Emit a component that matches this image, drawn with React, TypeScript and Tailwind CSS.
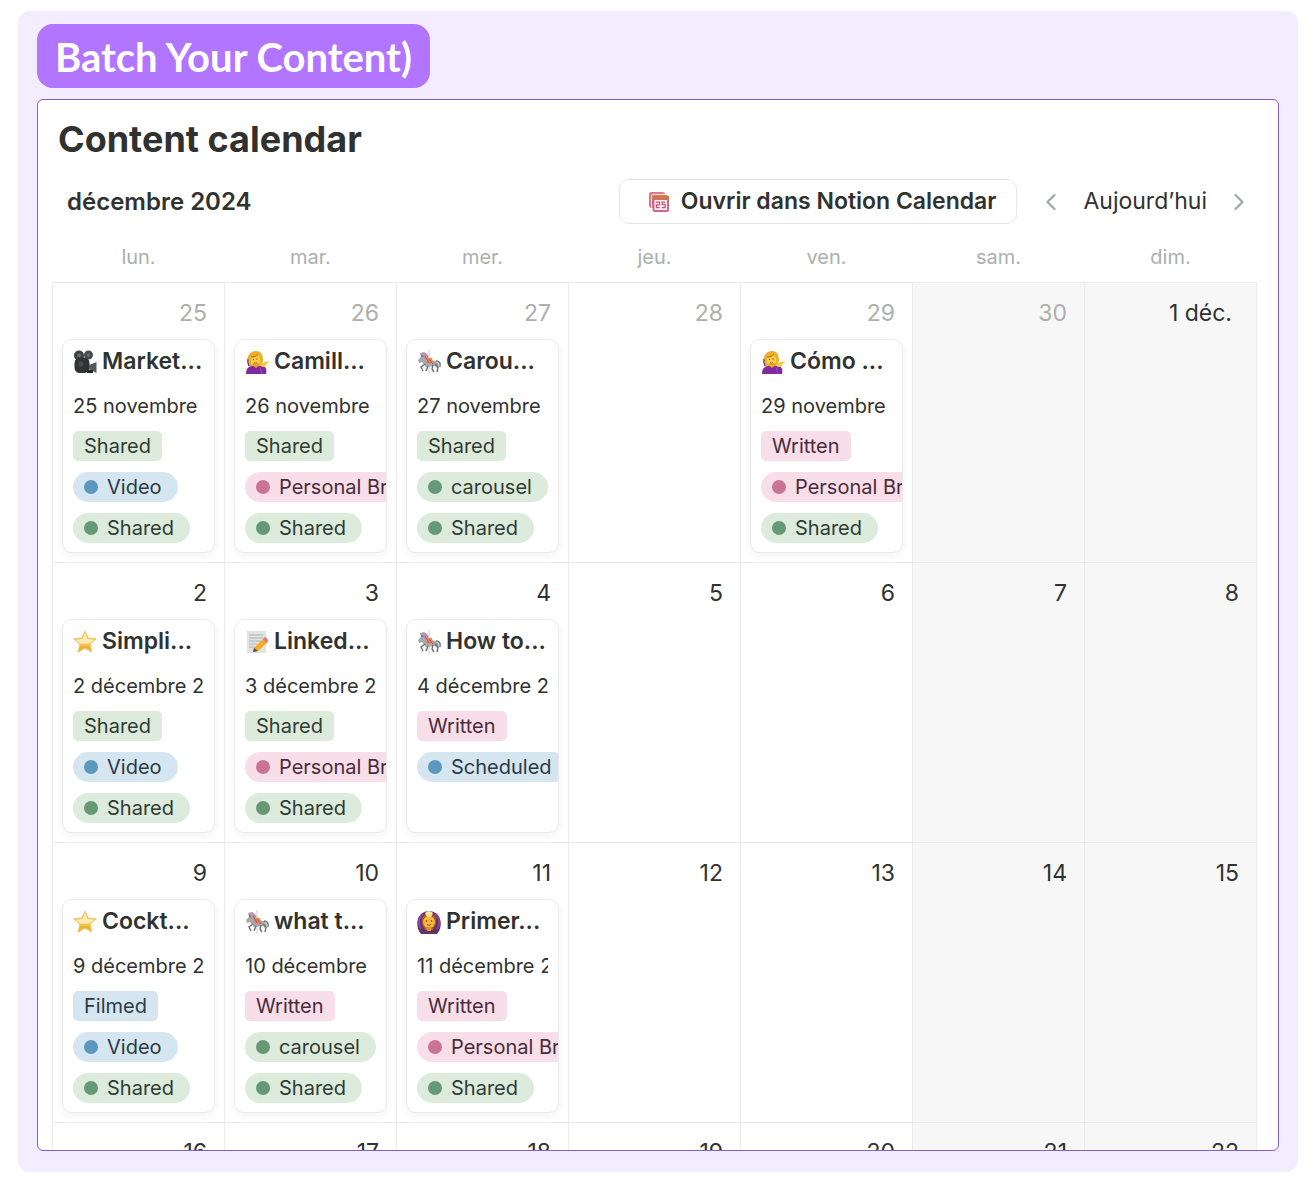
import React from 'react';
import { ChevronLeft, ChevronRight } from 'lucide-react';
import clsx from 'clsx';

type Color = 'green' | 'blue' | 'pink';
type IconName = 'camera' | 'woman' | 'horse' | 'star' | 'memo' | 'ok';

interface Post {
  icon: IconName;
  title: string;
  date: string;
  stage: { label: string; color: Color };
  pills: { label: string; color: Color }[];
}

interface Day {
  label: string;
  muted?: boolean;
  post?: Post;
}

const TAG_COLORS: Record<Color, string> = {
  green: 'bg-[#ddebdd] text-[#2f3b33]',
  blue: 'bg-[#d5e6f1] text-[#2b3a44]',
  pink: 'bg-[#f7dee9] text-[#4a2b39]',
};

const DOT_COLORS: Record<Color, string> = {
  green: 'bg-[#669878]',
  blue: 'bg-[#5c97be]',
  pink: 'bg-[#cb7492]',
};

const SHARED = { label: 'Shared', color: 'green' } as const;
const WRITTEN = { label: 'Written', color: 'pink' } as const;
const FILMED = { label: 'Filmed', color: 'blue' } as const;
const VIDEO = { label: 'Video', color: 'blue' } as const;
const CAROUSEL = { label: 'carousel', color: 'green' } as const;
const BRAND = { label: 'Personal Brand', color: 'pink' } as const;
const SCHEDULED = { label: 'Scheduled', color: 'blue' } as const;

const WEEKDAYS = ['lun.', 'mar.', 'mer.', 'jeu.', 'ven.', 'sam.', 'dim.'];

const WEEKS: Day[][] = [
  [
    { label: '25', muted: true, post: { icon: 'camera', title: 'Market...', date: '25 novembre', stage: SHARED, pills: [VIDEO, SHARED] } },
    { label: '26', muted: true, post: { icon: 'woman', title: 'Camill...', date: '26 novembre', stage: SHARED, pills: [BRAND, SHARED] } },
    { label: '27', muted: true, post: { icon: 'horse', title: 'Carou...', date: '27 novembre', stage: SHARED, pills: [CAROUSEL, SHARED] } },
    { label: '28', muted: true },
    { label: '29', muted: true, post: { icon: 'woman', title: 'Cómo ...', date: '29 novembre', stage: WRITTEN, pills: [BRAND, SHARED] } },
    { label: '30', muted: true },
    { label: '1 déc.' },
  ],
  [
    { label: '2', post: { icon: 'star', title: 'Simpli...', date: '2 décembre 2024', stage: SHARED, pills: [VIDEO, SHARED] } },
    { label: '3', post: { icon: 'memo', title: 'Linked...', date: '3 décembre 2024', stage: SHARED, pills: [BRAND, SHARED] } },
    { label: '4', post: { icon: 'horse', title: 'How to...', date: '4 décembre 2024', stage: WRITTEN, pills: [SCHEDULED] } },
    { label: '5' },
    { label: '6' },
    { label: '7' },
    { label: '8' },
  ],
  [
    { label: '9', post: { icon: 'star', title: 'Cockt...', date: '9 décembre 2024', stage: FILMED, pills: [VIDEO, SHARED] } },
    { label: '10', post: { icon: 'horse', title: 'what t...', date: '10 décembre', stage: WRITTEN, pills: [CAROUSEL, SHARED] } },
    { label: '11', post: { icon: 'ok', title: 'Primer...', date: '11 décembre 2024', stage: WRITTEN, pills: [BRAND, SHARED] } },
    { label: '12' },
    { label: '13' },
    { label: '14' },
    { label: '15' },
  ],
];

const LAST_WEEK = ['16', '17', '18', '19', '20', '21', '22'];

const PostIcon = ({ name }: { name: IconName }) => (
  <svg viewBox="0 0 24 24" className="size-6 shrink-0" aria-hidden="true">
    {name === 'camera' && (
      <>
        <circle cx="6" cy="5.5" r="5" fill="#3d4040" />
        <circle cx="15.5" cy="5" r="4.5" fill="#474a4a" />
        <circle cx="6" cy="5.5" r="2" fill="#6a6d6d" />
        <circle cx="15.5" cy="5" r="1.7" fill="#6a6d6d" />
        <rect x="1.500" y="7.500" width="15" height="15.500" rx="5.500" fill="#303333" />
        <path d="M16 15l7.500-3v11L16 19z" fill="#55585a" />
        <circle cx="8" cy="14" r="2.500" fill="#484c4c" />
        <path d="M14 20h6v3h-6z" fill="#252828" />
      </>
    )}
    {name === 'woman' && (
      <>
        <path d="M3 15C1 6 5 1 11 1c5 0 7 4 7 10l-3 6H4z" fill="#edae2d" />
        <path d="M1 24c0-6 3-8 8-8h8c4 0 5 4 4 8z" fill="#7f2aa0" />
        <path d="M6 8c4 0 6-1 7-3 3 3 3 7 1 9-2 3-7 2-8-1z" fill="#ffcf45" />
        <path d="M7 15l4 3 4-3-1-2H8z" fill="#e5a233" />
        <path d="M15 14c2 0 4-3 8.500-2.500 1 .5 0 1.500-1.500 2l-2 3c-2 1.500-5 0-5-2.500z" fill="#ffc83c" />
        <path d="M3 9c-1 3 0 5 1 7" stroke="#5d3b88" strokeWidth="1.200" fill="none" />
        <circle cx="8.500" cy="9.500" r="0.700" fill="#8a5420" />
        <circle cx="12" cy="9" r="0.700" fill="#8a5420" />
        <path d="M6 7q5 0 7-3M9 12.500q2 1 3 0" stroke="#b9742a" fill="none" />
        <path d="M15 17l2 7" stroke="#9b45b8" strokeWidth="1.200" />
      </>
    )}
    {name === 'horse' && (
      <>
        <path d="M12 0v24" stroke="#c9cccf" strokeWidth="1" />
        <path d="M3 3l4-1 4 3 1 5 7 1 3 3-1 5-3-3-9 1-4-5-3 1-1-3 3-3z" fill="#a5a7ab" />
        <path d="M7 2l3 3 2 4-2 1-3-4z" fill="#d78aa4" />
        <path d="M10 8h5l1 4-4 2-3-3z" fill="#e7953b" />
        <path d="M12 9l4 5M8 6l4 7" stroke="#c54f88" strokeWidth="1.200" />
        <path d="M8 14l-4 3 2 4M11 16l-2 5M18 14l3 3-1 5M16 15l-1 4 2 3" stroke="#6d7075" strokeWidth="1.400" fill="none" />
        <path d="M19 11q5 0 4 6" stroke="#717479" strokeWidth="1.400" fill="none" />
        <circle cx="5" cy="6" r="0.800" fill="#34373a" />
      </>
    )}
    {name === 'star' && (
      <>
        <path
          d="M12 1l3.200 7 8 .8-6 5.500 1.800 8-7-4-7 4 1.800-8-6-5.500 8-.8z"
          fill="#f5c54a"
          stroke="#eec060"
          strokeWidth="0.800"
          strokeLinejoin="round"
        />
        <path d="M12 2.500l2.600 6.500 6.900.8-5 4H7.500l-5-4 6.900-.8z" fill="#fbeab8" />
        <path d="M6 21l1.500-5h9L18 21l-6-3.500z" fill="#e8b33a" />
      </>
    )}
    {name === 'memo' && (
      <>
        <path d="M2 1h19v22H2z" fill="#e1e4e2" />
        <path d="M4 5h14M4 8h14M4 11h12M4 14h8M4 17h6" stroke="#a7acaa" strokeWidth="0.900" />
        <path d="M9 18L19 8l4 4-10 9-5 1z" fill="#f4ac27" />
        <path d="M18 9l2-2q3 1 3 4l-2 2z" fill="#df7a78" />
        <path d="M9 18l4 3-5 1z" fill="#544c3f" />
      </>
    )}
    {name === 'ok' && (
      <>
        <path d="M4 24C-1 18-1 9 4 4c5-4 11-4 16 0 5 5 5 14 0 20z" fill="#5f3268" />
        <path d="M4 19C0 13 2 8 6 4M20 19c4-6 2-11-2-15" stroke="#8a43a5" strokeWidth="2" fill="none" />
        <path d="M5 14C4 7 7 3 12 3s8 4 7 11l-3 6H8z" fill="#a85d2c" />
        <circle cx="12" cy="12" r="6" fill="#f5b838" />
        <path d="M9 17h6l-1 4h-4z" fill="#e0922b" />
        <path d="M8 3q4-4 8 0l-2 4h-4z" fill="#ffe09a" />
        <circle cx="9.500" cy="11" r="0.800" fill="#62401d" />
        <circle cx="14.500" cy="11" r="0.800" fill="#62401d" />
        <path d="M10 14.500q2 1.500 4 0" stroke="#a24b26" fill="none" />
      </>
    )}
  </svg>
);

const NotionCalendarIcon = () => (
  <svg viewBox="0 0 22 22" className="size-[22px]" aria-hidden="true">
    <path d="M3 1h12q2 0 2 2v2H5v12H3q-2 0-2-2V3q0-2 2-2z" fill="#d8798c" />
    <path d="M3.500 17V5q0-1.500 1.500-1.500h13" stroke="#f7e6e6" fill="none" />
    <rect x="4.500" y="4.500" width="16.500" height="16.500" rx="2" fill="#cf6a86" />
    <path d="M4.500 8V6.500q0-2 2-2H19q2 0 2 2V8z" fill="#cf7a35" />
    <rect x="6.500" y="9" width="12.500" height="10" fill="#fbeff2" />
    <path
      d="M8 11.200h3.500v2.600H8.500v2.900h3.200M17.500 11.200h-3.300v2.500h3v3h-3.400"
      stroke="#cf5578"
      strokeWidth="1.300"
      fill="none"
    />
  </svg>
);

const PostCard = ({ post }: { post: Post }) => (
  <article className="mx-[9px] h-[214px] overflow-hidden rounded-[10px] border border-[#ebebea] bg-white pl-[10px] shadow-[0_3px_8px_rgba(0,0,0,0.05)]">
    <h3 className="flex h-11 items-center gap-[5px] whitespace-nowrap text-[23px] font-semibold">
      <PostIcon name={post.icon} />
      {post.title}
    </h3>
    <p className="mr-[10px] h-11 overflow-hidden whitespace-nowrap text-[20px] leading-[44px]">{post.date}</p>
    <div className="mt-[3px] flex flex-col items-start gap-[11px] whitespace-nowrap text-[20px] leading-[30px]">
      <span className={clsx('rounded-[5px] px-[11px]', TAG_COLORS[post.stage.color])}>{post.stage.label}</span>
      {post.pills.map((pill) => (
        <span
          key={pill.label}
          className={clsx('flex items-center gap-[9px] rounded-full pl-[11px] pr-4', TAG_COLORS[pill.color])}
        >
          <span className={clsx('size-[14px] rounded-full', DOT_COLORS[pill.color])} />
          {pill.label}
        </span>
      ))}
    </div>
  </article>
);

const App = () => {
  return (
    <main className="bg-white px-[18px] pb-[19px] pt-[11px] font-['Inter','Liberation_Sans',sans-serif] text-[#30322f]">
      <div className="rounded-xl bg-[#f3edff] px-[19px] pb-[21px] pt-[13px]">
        <h1 className="w-fit rounded-2xl bg-[#b175ff] px-[18px] pt-[2px] font-['Lato',sans-serif] text-[40px] font-bold leading-[62px] text-white">
          Batch Your Content)
        </h1>

        <section className="mt-[11px] overflow-hidden rounded-md border border-[#855fc9] bg-white pl-[14px] pr-[21px]">
          <h2 className="pl-[6px] pt-[15px] text-[36px] font-bold leading-[48px]">Content calendar</h2>

          {/* Toolbar */}
          <div className="mt-4 flex items-center pl-[15px] pr-1">
            <p className="text-2xl font-semibold">décembre 2024</p>
            <button className="ml-auto flex h-[45px] items-center gap-[11px] rounded-[10px] border border-[#e6e6e5] pl-7 pr-5 text-[23px] font-semibold">
              <NotionCalendarIcon />
              Ouvrir dans Notion Calendar
            </button>
            <button aria-label="Mois précédent" className="ml-5 text-[#a3a9a5]">
              <ChevronLeft className="size-7" strokeWidth={2} />
            </button>
            <button className="mx-[18px] text-[23px]">Aujourd’hui</button>
            <button aria-label="Mois suivant" className="text-[#a3a9a5]">
              <ChevronRight className="size-7" strokeWidth={2} />
            </button>
          </div>

          <table className="w-full table-fixed border-collapse">
            <thead>
              <tr>
                {WEEKDAYS.map((day) => (
                  <th key={day} scope="col" className="h-[58px] pb-0 pt-2 text-[20px] font-normal text-[#abb0ad]">
                    {day}
                  </th>
                ))}
              </tr>
            </thead>
            <tbody>
              {WEEKS.map((week) => (
                <tr key={week[0].label}>
                  {week.map((day, i) => (
                    <td
                      key={day.label}
                      className={clsx('h-[280px] border border-[#ebebea] p-0 align-top', i > 4 && 'bg-[#f7f7f7]')}
                    >
                      <p
                        className={clsx(
                          'h-14 text-right text-[23px] leading-[60px]',
                          day.label === '1 déc.' ? 'pr-6' : 'pr-[17px]',
                          day.muted && 'text-[#abb0ad]',
                        )}
                      >
                        {day.label}
                      </p>
                      {day.post && <PostCard post={day.post} />}
                    </td>
                  ))}
                </tr>
              ))}
              {/* Next week peeks in at the bottom edge */}
              <tr>
                {LAST_WEEK.map((label, i) => (
                  <td key={label} className={clsx('border-x border-[#ebebea] p-0', i > 4 && 'bg-[#f7f7f7]')}>
                    <p className="h-[27px] overflow-hidden pr-[17px] text-right text-[23px] leading-[58px]">{label}</p>
                  </td>
                ))}
              </tr>
            </tbody>
          </table>
        </section>
      </div>
    </main>
  );
};

export default App;
